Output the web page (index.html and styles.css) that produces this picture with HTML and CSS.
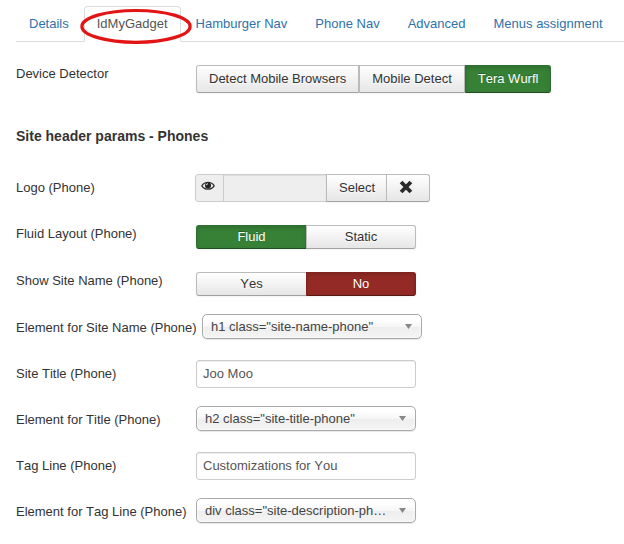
FILE: index.html
```html
<!DOCTYPE html>
<html lang="en">
<head>
<meta charset="utf-8">
<title>Template options</title>
<link rel="stylesheet" href="styles.css">
</head>
<body>
<nav class="tabs">
  <a class="tab">Details</a>
  <a class="tab active">IdMyGadget
    <svg class="marker" width="114" height="38" viewBox="0 0 114 38"><ellipse cx="57" cy="19.4" rx="54.1" ry="15.9" fill="none" stroke="#e31414" stroke-width="3.2"/></svg>
  </a>
  <a class="tab">Hamburger Nav</a>
  <a class="tab">Phone Nav</a>
  <a class="tab">Advanced</a>
  <a class="tab">Menus assignment</a>
</nav>
<main class="form">
  <div class="row radio-row">
    <label class="label">Device Detector</label>
    <div class="group detectors"><button class="btn">Detect Mobile Browsers</button><button class="btn">Mobile Detect</button><button class="btn green">Tera Wurfl</button></div>
  </div>
  <h4 class="heading">Site header params - Phones</h4>
  <div class="row">
    <label class="label">Logo (Phone)</label>
    <div class="group media">
      <span class="addon"><svg width="14" height="12" viewBox="0 0 14 12"><path d="M.8 5.8C3.6 1.2 10.4 1.2 13.2 5.8C10.4 10.2 3.6 10.2.8 5.8Z" fill="#eee" stroke="#333" stroke-width="1.3"/><circle cx="7" cy="5.5" r="3" fill="#222"/><path d="M5.3 5.2Q5.4 3.8 7 3.7" fill="none" stroke="#fff" stroke-width=".9"/></svg></span>
      <span class="media-input"></span>
      <button class="btn select-btn">Select</button>
      <button class="btn clear" aria-label="Clear"><svg width="14" height="14" viewBox="0 0 14 14"><path d="M2.1 2L11.9 12M11.9 2L2.1 12" stroke="#2b2b2b" stroke-width="3.9"/></svg></button>
    </div>
  </div>
  <div class="row radio-row">
    <label class="label">Fluid Layout (Phone)</label>
    <div class="group small"><button class="btn green">Fluid</button><button class="btn">Static</button></div>
  </div>
  <div class="row radio-row">
    <label class="label">Show Site Name (Phone)</label>
    <div class="group small"><button class="btn">Yes</button><button class="btn red">No</button></div>
  </div>
  <div class="row">
    <label class="label wide">Element for Site Name (Phone)</label>
    <div class="select"><span>h1 class="site-name-phone"</span><i class="arrow"></i></div>
  </div>
  <div class="row">
    <label class="label">Site Title (Phone)</label>
    <input class="input" value="Joo Moo">
  </div>
  <div class="row">
    <label class="label">Element for Title (Phone)</label>
    <div class="select"><span>h2 class="site-title-phone"</span><i class="arrow"></i></div>
  </div>
  <div class="row">
    <label class="label">Tag Line (Phone)</label>
    <input class="input" value="Customizations for You">
  </div>
  <div class="row">
    <label class="label">Element for Tag Line (Phone)</label>
    <div class="select"><span>div class="site-description-ph…</span><i class="arrow"></i></div>
  </div>
</main>
</body>
</html>
```
FILE: styles.css
```css
* { box-sizing: border-box; }
body {
  margin: 0;
  padding: 6px 0 0 16px;
  background: #fff;
  color: #333;
  font: 13px/18px "Liberation Sans", Arial, sans-serif;
  font-kerning: none;
  overflow: hidden;
}
.tabs {
  display: flex;
  gap: 2px;
  height: 36px;
  border-bottom: 1px solid #ddd;
}
.tab {
  height: 36px;
  padding: 8px 12px;
  border: 1px solid transparent;
  border-radius: 4px 4px 0 0;
  color: #3071a9;
  white-space: nowrap;
}
.tab.active {
  position: relative;
  background: #fff;
  border-color: #ddd #ddd #fff;
  color: #555;
}
.marker { position: absolute; left: -6px; top: 0; z-index: 1; }
.form { padding-top: 18px; }
.row {
  display: flex;
  align-items: flex-start;
  min-height: 28px;
  margin-bottom: 18px;
}
.label { width: 180px; flex: none; padding-top: 5px; white-space: nowrap; }
.label.wide { width: 186px; }
.heading { margin: 34px 0 29px; font-size: 14px; line-height: 18px; }
.group { display: flex; }
.radio-row .group { margin-top: 5px; }
.btn {
  height: 28px;
  margin: 0 0 0 -1px;
  padding: 4px 12px;
  border: 1px solid #bbb;
  border-bottom-color: #a2a2a2;
  border-radius: 0;
  background: linear-gradient(#fff, #e6e6e6);
  box-shadow: inset 0 1px 0 rgba(255,255,255,.2), 0 1px 2px rgba(0,0,0,.05);
  color: #333;
  font: inherit;
  font-kerning: none;
  text-shadow: 0 1px 1px rgba(255,255,255,.75);
}
.btn:first-child { margin-left: 0; border-radius: 3px 0 0 3px; }
.btn:last-child { border-radius: 0 3px 3px 0; }
.detectors .btn { margin-left: 0; }
.small .btn { width: 110px; height: 24px; padding: 2px 10px; }
.small .btn:first-child { width: 111px; }
.btn.green, .btn.red {
  color: #fff;
  text-shadow: 0 -1px 0 rgba(0,0,0,.25);
  box-shadow: inset 0 2px 4px rgba(0,0,0,.15), 0 1px 2px rgba(0,0,0,.05);
}
.btn.green { background: #378137; border-color: #2f6f2f #2f6f2f #1f4f1f; }
.btn.red { background: #942a25; border-color: #802420 #802420 #571916; }
.media { margin-left: -1px; }
.addon {
  width: 29px;
  height: 28px;
  padding: 5px 0 0 5px;
  line-height: 0;
  border: 1px solid #ccc;
  border-radius: 3px 0 0 3px;
  background: #eee;
}
.media-input {
  width: 104px;
  height: 28px;
  margin-left: -1px;
  border: 1px solid #ccc;
  background: #eee;
  box-shadow: inset 0 1px 1px rgba(0,0,0,.075);
}
.btn.select-btn { width: 61px; padding: 4px 0 4px 12px; text-align: left; }
.btn.clear { width: 44px; padding: 0 4px 3px 0; line-height: 0; }
.clear svg { vertical-align: middle; }
.input {
  width: 220px;
  height: 28px;
  padding: 3px 6px 5px;
  border: 1px solid #ccc;
  border-radius: 3px;
  box-shadow: inset 0 1px 1px rgba(0,0,0,.075);
  color: #555;
  font: inherit;
  font-kerning: none;
}
.select {
  display: flex;
  align-items: center;
  width: 220px;
  height: 25px;
  padding: 0 9px 0 8px;
  border: 1px solid #aaa;
  border-radius: 5px;
  background: linear-gradient(#fff 20%, #f6f6f6 50%, #eee 52%, #f4f4f4 100%);
  box-shadow: inset 0 0 3px #fff, 0 1px 1px rgba(0,0,0,.1);
  color: #444;
}
.select span { white-space: nowrap; }
.arrow {
  width: 7px;
  height: 5px;
  margin-left: auto;
  background: #888;
  clip-path: polygon(0 0, 100% 0, 50% 100%);
}
```
